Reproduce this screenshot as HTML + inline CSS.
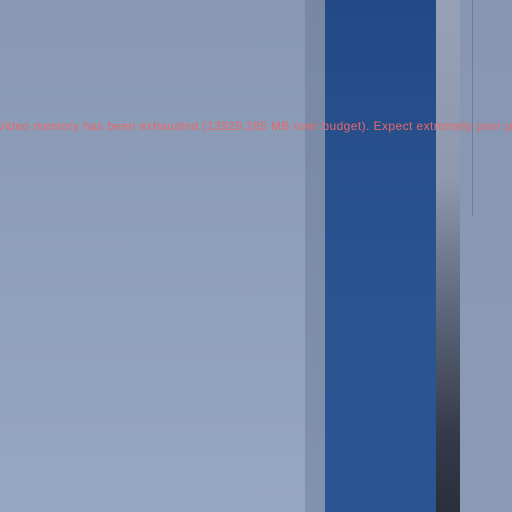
<!DOCTYPE html>
<html><head><style>
html,body{margin:0;padding:0;width:512px;height:512px;overflow:hidden;position:relative;background:linear-gradient(#8898b3,#96a7c1);}
div{position:absolute;top:0;height:512px;}
#a{left:305px;width:20px;background:linear-gradient(#7888a3,#8192ad);}
#b{left:325px;width:111px;background:linear-gradient(#234a87,#2a5591 60%,#2b5592);}
#c{left:436px;width:24px;background:linear-gradient(#96a0b6 0%,#8e98ae 35%,#5e687c 60%,#343a4a 85%,#2a2f3d 100%);}
#d{left:460px;width:52px;background:linear-gradient(#8796b1,#8b9bb6);}
#e{left:472px;width:1px;height:216px;background:#6f7d98;}
#w{position:absolute;left:0;top:119px;width:512px;height:16px;overflow:hidden;}
#t{position:absolute;left:-3px;top:0;font:12px "Liberation Sans",sans-serif;color:#e86a6a;white-space:nowrap;letter-spacing:0.42px;}
</style></head><body>
<div id="a"></div><div id="b"></div><div id="c"></div><div id="d"></div><div id="e"></div>
<div id="w"><span id="t">Video memory has been exhausted (13929.285 MB over budget). Expect extremely poor pe</span></div>
</body></html>
